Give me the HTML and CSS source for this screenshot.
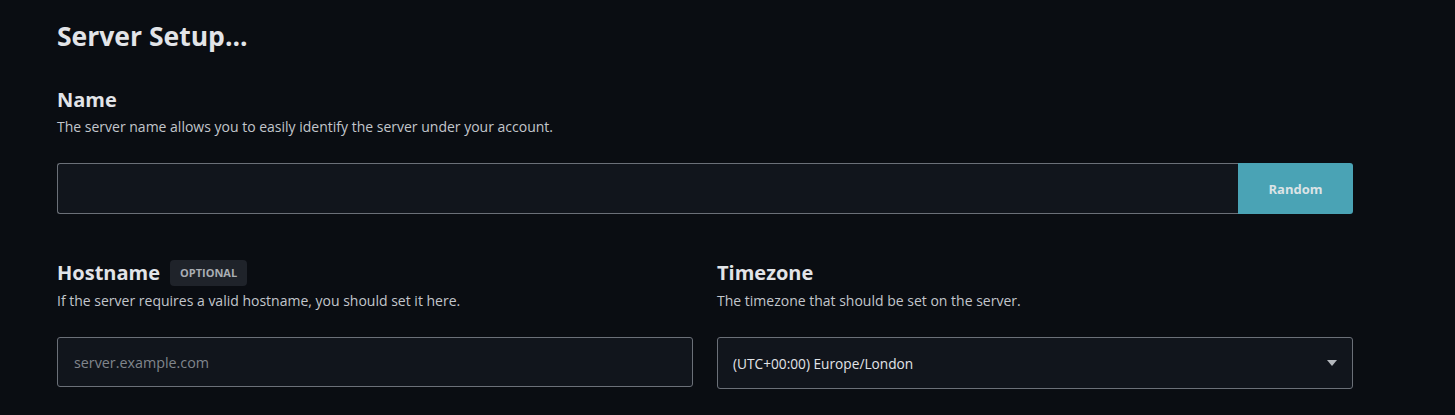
FILE: index.html
```html
<!DOCTYPE html>
<html>
<head>
<meta charset="utf-8">
<link rel="stylesheet" href="styles.css">
</head>
<body>
<main class="page">
  <h1 class="title">Server Setup...</h1>

  <section class="field">
    <h2 class="label">Name</h2>
    <p class="desc">The server name allows you to easily identify the server under your account.</p>
    <div class="input-group">
      <div class="input name-input"></div>
      <button class="btn-random">Random</button>
    </div>
  </section>

  <div class="row">
    <section class="field col">
      <h2 class="label">Hostname <span class="badge">OPTIONAL</span></h2>
      <p class="desc">If the server requires a valid hostname, you should set it here.</p>
      <div class="input placeholder">server.example.com</div>
    </section>
    <section class="field col">
      <h2 class="label">Timezone</h2>
      <p class="desc">The timezone that should be set on the server.</p>
      <div class="input select">
        <span>(UTC+00:00) Europe/London</span>
        <svg class="caret" width="10" height="6" viewBox="0 0 10 6"><path d="M0 0H10L5 6Z" fill="#b4b8bd"/></svg>
      </div>
    </section>
  </div>
</main>
</body>
</html>
```

FILE: styles.css
```css
html, body {
  margin: 0;
  padding: 0;
  background: #0a0d12;
}
body {
  font-family: "Open Sans", "Noto Sans", sans-serif;
  color: #e4e6ea;
}
.page {
  width: 1296px;
  padding: 18px 0 0 57px;
}
.title {
  margin: 0;
  font-size: 26.5px;
  font-weight: 700;
  line-height: 36px;
  color: #e2e4e8;
}
.field {
  display: flex;
  flex-direction: column;
}
.page > .field {
  margin-top: 32px;
}
.label {
  margin: 0;
  font-size: 20px;
  font-weight: 700;
  line-height: 28px;
  color: #e2e4e8;
  display: flex;
  align-items: center;
  gap: 10px;
}
.desc {
  margin: 3px 0 0;
  font-size: 14px;
  line-height: 20px;
  color: #c2c6cc;
}
.col .desc {
  margin-top: 4px;
}
.input-group {
  margin-top: 26px;
  display: flex;
  height: 51px;
}
.input {
  box-sizing: border-box;
  background: #11151c;
  border: 1px solid #6b7078;
  border-radius: 3px;
  display: flex;
  align-items: center;
  font-size: 13.7px;
}
.name-input {
  flex: 1;
  border-radius: 3px 0 0 3px;
  border-right: none;
}
.btn-random {
  width: 115px;
  border: none;
  background: #4aa3b5;
  color: #dce3e6;
  font-family: inherit;
  font-weight: 700;
  font-size: 13px;
  border-radius: 0 3px 3px 0;
  padding: 0;
}
.row {
  display: flex;
  gap: 24px;
  margin-top: 45px;
}
.col {
  flex: 1;
}
.badge {
  background: #1f232a;
  color: #a9adb3;
  font-size: 11px;
  font-weight: 700;
  line-height: 26px;
  padding: 0 10px;
  border-radius: 4px;
}
.col .input {
  margin-top: 26px;
  height: 50px;
  padding: 0 16px;
}
.placeholder {
  color: #80858c;
  font-size: 14.3px !important;
}
.select {
  justify-content: space-between;
  color: #e2e4e8;
  padding: 0 15px 0 15px !important;
  height: 52px !important;
}
.caret {
  display: block;
}
```
